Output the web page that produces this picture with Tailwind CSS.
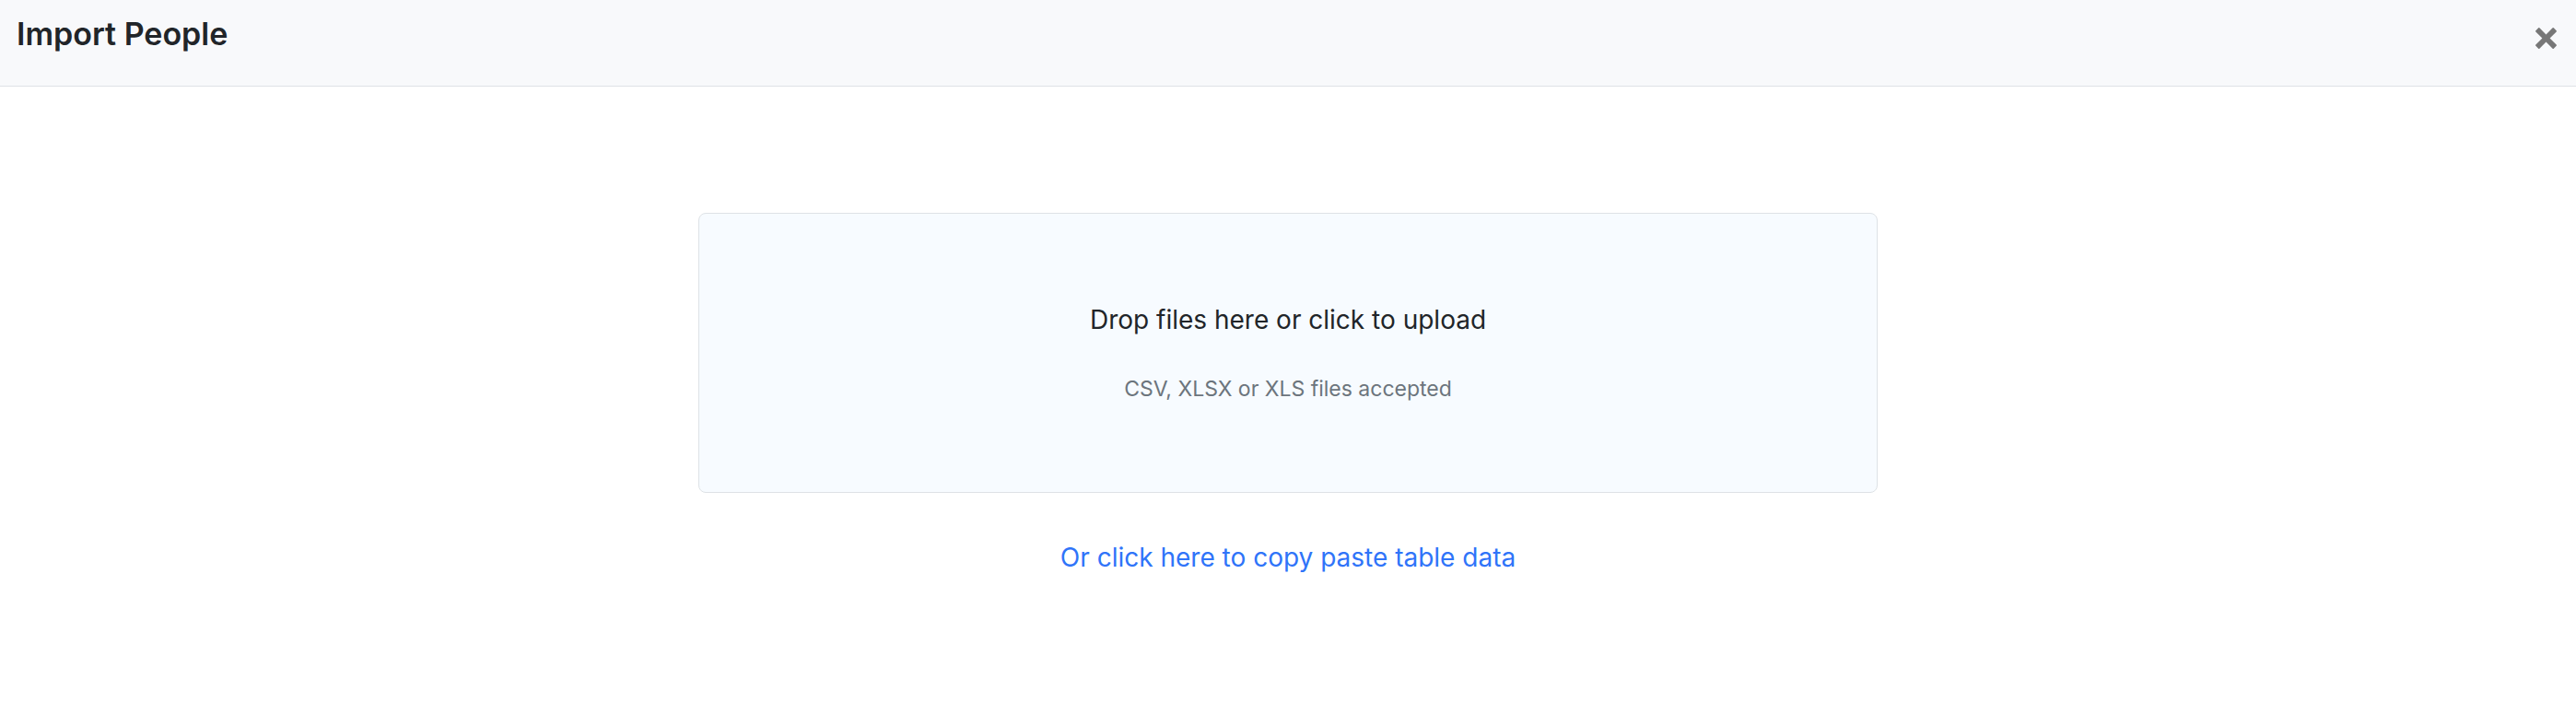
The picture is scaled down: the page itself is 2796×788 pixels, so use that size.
<!DOCTYPE html>
<html lang="en">
<head>
    <meta charset="UTF-8">
    <meta name="viewport" content="width=device-width, initial-scale=1.0">
    <title>Import People</title>
    <script src="https://cdn.jsdelivr.net/npm/@tailwindcss/browser@4"></script>
</head>
<body class="bg-white text-[#212529] font-['Inter',sans-serif] min-h-screen">
    <!-- Header -->
    <header class="flex items-start justify-between bg-[#f8f9fb] border-b border-[#dee2e6] pt-4 pb-[35px] pl-[18px] pr-5">
        <h1 class="text-[34px] leading-[42px] font-semibold">Import People</h1>
        <button type="button" aria-label="Close" class="mt-3.5 text-[#777777] cursor-pointer">
            <svg class="size-6" viewBox="0 0 24 24" fill="currentColor" aria-hidden="true">
                <path d="M3.2.3q.6-.5 1.2 0L11.5 7.4 18.6.3q.6-.5 1.2 0L22.7 3.200q.5.6 0 1.200L15.600 11.500l7.100 7.100q.5.6 0 1.200l-2.900 2.900q-.6.5-1.200 0L11.500 15.600 4.400 22.700q-.6.5-1.200 0L.3 19.800q-.5-.6 0-1.200L7.400 11.500.3 4.400q-.5-.6 0-1.200z"/>
            </svg>
        </button>
    </header>

    <!-- Upload area -->
    <main class="flex flex-col items-center px-6 pt-[137px]">
        <label for="people-file" class="relative flex flex-col items-center justify-center gap-9 w-full max-w-7xl py-[94px] bg-[#f7fbff] border border-[#dee2e6] rounded-lg text-center cursor-pointer">
            <span class="text-[28px] leading-[42px]">Drop files here or click to upload</span>
            <span class="text-[23px] leading-9 text-[#6c757d]">CSV, XLSX or XLS files accepted</span>
            <input id="people-file" type="file" accept=".csv,.xlsx,.xls" class="sr-only">
        </label>
        <a href="#paste" class="mt-[49px] text-[28px] leading-[42px] text-[#2f74f9]">Or click here to copy paste table data</a>
    </main>
</body>
</html>
